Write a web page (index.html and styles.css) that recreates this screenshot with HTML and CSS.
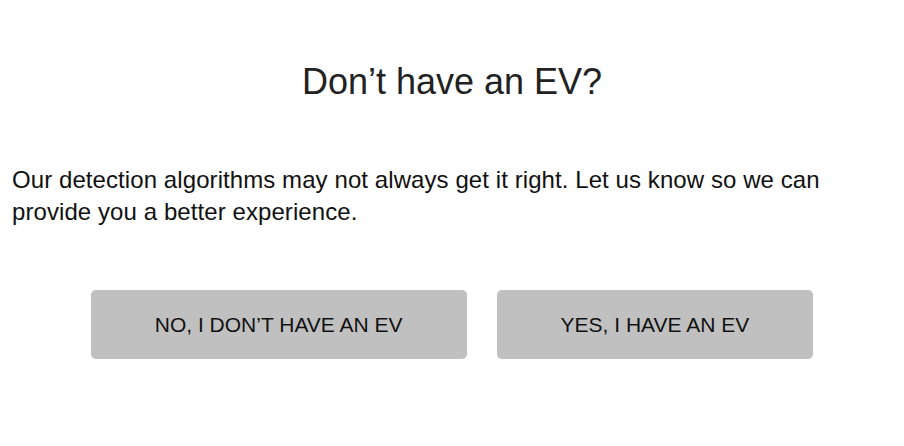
FILE: index.html
```html
<!DOCTYPE html>
<html lang="en">
<head>
<meta charset="utf-8">
<title>Don’t have an EV?</title>
<link rel="stylesheet" href="styles.css">
</head>
<body>
<main class="dialog">
  <h1 class="dialog-title">Don’t have an EV?</h1>
  <p class="dialog-text">Our detection algorithms may not always get it right. Let us know so we can provide you a better experience.</p>
  <div class="dialog-actions">
    <button class="action-btn" type="button">NO, I DON’T HAVE AN EV</button>
    <button class="action-btn" type="button">YES, I HAVE AN EV</button>
  </div>
</main>
</body>
</html>
```
FILE: styles.css
```css
html, body {
  margin: 0;
  padding: 0;
  background: #ffffff;
}

body {
  font-family: "Liberation Sans", Arial, Helvetica, sans-serif;
  color: #111111;
}

.dialog {
  padding: 0 12px;
}

.dialog-title {
  margin: 61px 0 0;
  font-size: 36px;
  line-height: 42px;
  font-weight: 400;
  text-align: center;
  color: #222222;
}

.dialog-text {
  margin: 61px 0 0;
  font-size: 24px;
  line-height: 32px;
  letter-spacing: 0.08px;
  color: #111111;
}

.dialog-actions {
  margin-top: 62px;
  display: flex;
  justify-content: center;
  gap: 30px;
}

.action-btn {
  height: 69px;
  padding: 0 64px;
  border: none;
  border-radius: 5px;
  background: #c0c0c0;
  color: #111111;
  font-family: "Liberation Sans", Arial, Helvetica, sans-serif;
  font-size: 21px;
  line-height: 1;
  cursor: pointer;
}
```
